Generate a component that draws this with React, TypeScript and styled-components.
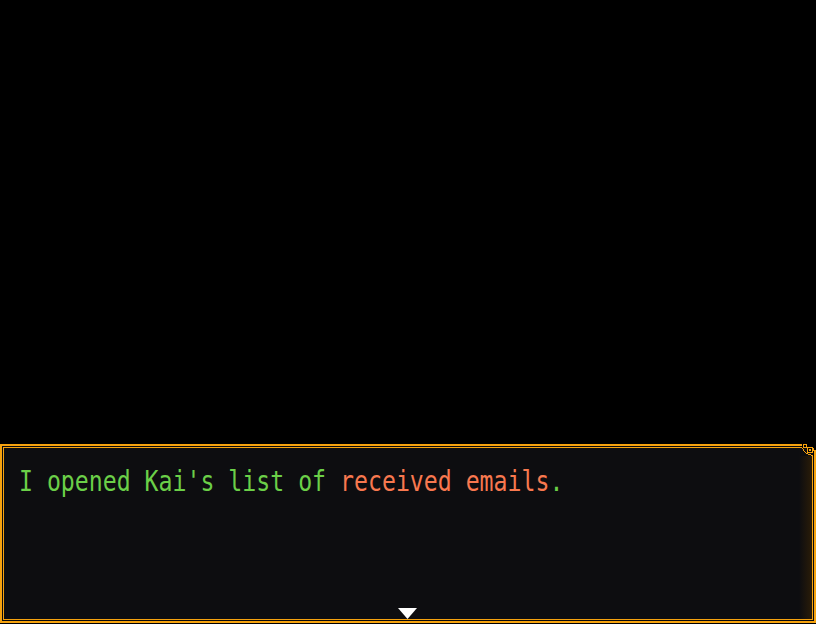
import React from "react";
import styled, { createGlobalStyle } from "styled-components";

const Global = createGlobalStyle`
  html, body { margin: 0; padding: 0; background: #000; }
  #root { width: 816px; height: 624px; }
`;

const Screen = styled.div`
  width: 816px;
  height: 624px;
  background: #000;
  display: flex;
  flex-direction: column;
  justify-content: flex-end;
  padding-bottom: 1px;
  box-sizing: border-box;
`;

const MessageWindow = styled.div`
  position: relative;
  height: 179px;
  box-sizing: border-box;
  border: 2px solid #f5a20f;
  padding: 1px;
  background: #0a0a0c;
`;

const Inner = styled.div`
  height: 100%;
  box-sizing: border-box;
  border: 1px solid #f5a20f;
  background: linear-gradient(to right, #0d0d10 0%, #0d0d10 98.4%, #2a1c08 100%);
  padding: 16px 0 0 15px;
  overflow: hidden;
`;

const Line = styled.p`
  margin: 0;
  font-family: "DejaVu Sans Mono", "Liberation Mono", monospace;
  font-size: 28px;
  line-height: 36px;
  color: #6bcf48;
  white-space: pre;
  transform: scaleX(0.828);
  transform-origin: left center;
`;

const Highlight = styled.span`
  color: #f8784f;
`;

const Ornament = styled.svg`
  position: absolute;
  top: -2px;
  right: -2px;
  width: 22px;
  height: 22px;
`;

const Caret = styled.svg`
  position: absolute;
  left: 396px;
  bottom: 2px;
  width: 19px;
  height: 11px;
`;

const O = "#f5a20f";
const BG = "#0d0d10";

export default function App() {
  return (
    <>
      <Global />
      <Screen>
        <MessageWindow>
          <Inner>
            <Line>
              I opened Kai's list of <Highlight>received emails</Highlight>.
            </Line>
          </Inner>
          <Ornament viewBox="0 0 22 22" shapeRendering="crispEdges">
            {/* clear corner area */}
            <rect x="6" y="0" width="16" height="12" fill="#000" />
            <rect x="6" y="3" width="13" height="9" fill={BG} />
            {/* outer top line ends */}
            <rect x="0" y="0" width="8" height="2" fill={O} />
            {/* inner line stepping down */}
            <rect x="6" y="3" width="2" height="1" fill={O} />
            <rect x="8" y="4" width="1" height="1" fill={O} />
            <rect x="9" y="5" width="1" height="2" fill={O} />
            <rect x="10" y="7" width="1" height="1" fill={O} />
            <rect x="11" y="8" width="1" height="1" fill={O} />
            <rect x="12" y="9" width="2" height="1" fill={O} />
            <rect x="14" y="10" width="3" height="1" fill={O} />
            <rect x="17" y="11" width="1" height="1" fill={O} />
            {/* small ring */}
            <rect x="9" y="0" width="4" height="4" fill={O} />
            <rect x="10" y="1" width="2" height="2" fill="#000" />
            {/* big ring with dot */}
            <rect x="13" y="3" width="6" height="6" fill={O} />
            <rect x="14" y="4" width="4" height="4" fill="#000" />
            <rect x="15" y="5" width="2" height="2" fill={O} />
            {/* right side lines */}
            <rect x="18" y="11" width="1" height="11" fill={O} />
            <rect x="20" y="6" width="2" height="16" fill={O} />
            <rect x="19" y="4" width="1" height="3" fill={O} />
          </Ornament>
          <Caret viewBox="0 0 19 11">
            <polygon points="0,0 19,0 9.5,11" fill="#ffffff" />
          </Caret>
        </MessageWindow>
      </Screen>
    </>
  );
}
